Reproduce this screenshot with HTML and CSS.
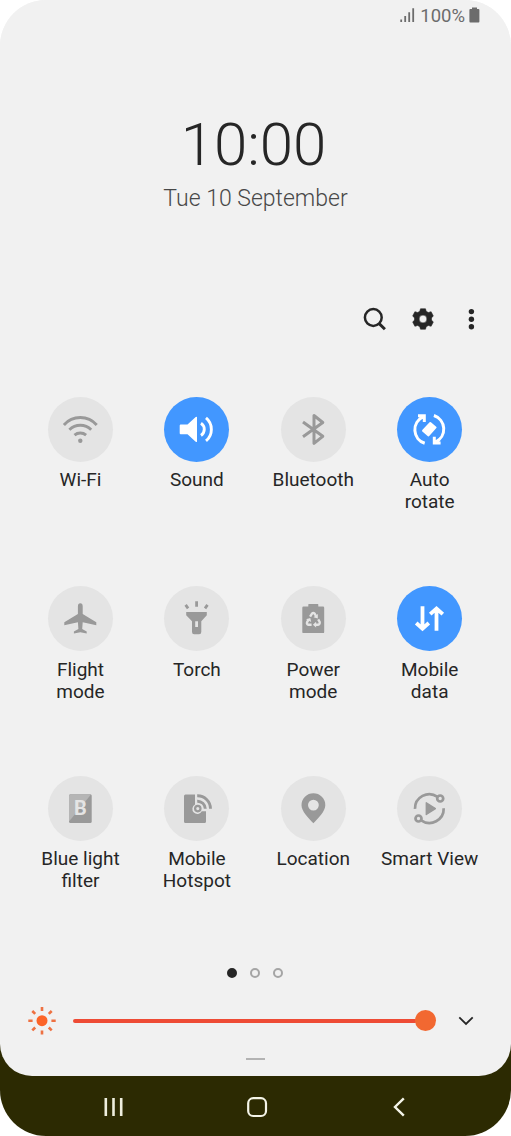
FILE: index.html
```html
<!DOCTYPE html>
<html lang="en">
<head>
<meta charset="utf-8">
<title>Quick settings</title>
<link rel="stylesheet" href="styles.css">
</head>
<body>
<div class="phone">
  <main class="panel">
    <header class="status">
      <svg class="signal" width="15" height="16" viewBox="0 0 15 16"><path d="M1.200 12.400V15M5.200 9V15M9.200 5.200V15M13.200 1.300V15" fill="none" stroke="#6c6c6c" stroke-width="1.800"/></svg>
      <span class="percent">100%</span>
      <svg class="battery" width="11" height="16" viewBox="0 0 11 16"><path d="M3 0.400H8V2H9.500Q10.400 2 10.400 3V14.500Q10.400 15.500 9.500 15.500H1.300Q.4 15.500 .4 14.500V3Q.4 2 1.300 2H3Z" fill="#6c6c6c"/></svg>
    </header>
    <section class="clock">
      <div class="time">10:00</div>
      <div class="date">Tue 10 September</div>
    </section>
    <nav class="actions">
      <svg width="24" height="24" viewBox="0 0 24 24"><g fill="none" stroke="#262626"><circle cx="10.300" cy="10.500" r="8.400" stroke-width="2.500"/><path d="M16.200 16.600L21.900 22.300" stroke-width="2.900"/></g></svg>
      <svg width="24" height="24" viewBox="0 0 24 24"><path fill="#262626" stroke="#262626" stroke-width=".6" stroke-linejoin="round" fill-rule="evenodd" d="M9.500 1.800H14.500L15.200 4.300L17.300 5.500L20.100 4.700L22.300 8.900L20.500 10.900V13.100L22.300 15.100L20.100 19.300L17.300 18.500L15.200 19.700L14.500 22.200H9.500L8.800 19.700L6.700 18.500L3.900 19.300L1.700 15.100L3.500 13.100V10.900L1.700 8.900L3.900 4.700L6.700 5.500L8.800 4.300ZM12 8.100A3.900 3.900 0 1 0 12 15.900A3.900 3.900 0 1 0 12 8.100Z"/></svg>
      <svg width="24" height="24" viewBox="0 0 24 24"><g fill="#262626"><circle cx="12.400" cy="4.600" r="2.700"/><circle cx="12.400" cy="12.200" r="2.700"/><circle cx="12.400" cy="19.700" r="2.700"/></g></svg>
    </nav>
    <section class="tiles">
      <div class="tile">
        <svg class="disc" viewBox="0 0 65 65"><g fill="none" stroke="#999" stroke-width="2.900"><path d="M15.900 28A21.800 21.800 0 0 1 48.700 28M21.400 32.800A15.400 15.400 0 0 1 43.200 32.800M26.500 38.100A9 9 0 0 1 38.100 38.100"/></g><circle cx="32.300" cy="43.700" r="2.200" fill="#999"/></svg>
        <span class="label">Wi-Fi</span>
      </div>
      <div class="tile">
        <svg class="disc on" viewBox="0 0 65 65"><path d="M16.700 27.600H23.500L31.700 20Q33 19.200 33 20.500V44.200Q33 45.600 31.700 44.700L23.500 37.200H16.700Q15.700 37.200 15.700 36.200V28.600Q15.700 27.600 16.700 27.600Z" fill="#fff"/><path d="M37 26.200A7.400 7.400 0 0 1 37 38.500M42 20.900A15 15 0 0 1 42 43.900" fill="none" stroke="#fff" stroke-width="2.900"/></svg>
        <span class="label">Sound</span>
      </div>
      <div class="tile">
        <svg class="disc" viewBox="0 0 65 65"><path d="M22 25L41.800 39.300L33 46.300V18.500L41.800 25.500L22 39.700" fill="none" stroke="#999" stroke-width="3" stroke-linejoin="round"/></svg>
        <span class="label">Bluetooth</span>
      </div>
      <div class="tile">
        <svg class="disc on" viewBox="0 0 65 65"><g fill="none" stroke="#fff" stroke-width="3"><path d="M27.700 46.300A14.300 14.300 0 0 1 26 19.800M21 18.700H27.300V25"/><path d="M36.900 18.500A14.300 14.300 0 0 1 38.600 45M43.600 46.100H37.300V39.800"/></g><path d="M33.300 26L38.600 30.400L31.500 38.400L26 33.800Z" fill="#fff" stroke="#fff" stroke-width="2" stroke-linejoin="round"/></svg>
        <span class="label">Auto<br>rotate</span>
      </div>
      <div class="tile">
        <svg class="disc" viewBox="0 0 65 65"><path d="M32.300 17.200Q34.700 17.200 34.700 20.500V27.900L48.300 36.300V39.200L34.700 36.300L34.200 43.100L38.700 45.600V47.500L32.300 46.300L25.900 47.500V45.600L30.400 43.100L29.900 36.300L16.300 39.200V36.300L29.900 27.900V20.500Q29.900 17.200 32.300 17.200Z" fill="#999"/></svg>
        <span class="label">Flight<br>mode</span>
      </div>
      <div class="tile">
        <svg class="disc" viewBox="0 0 65 65"><path fill="#999" fill-rule="evenodd" d="M22.200 26H42.800V29.200L37.300 35.300V46Q37.300 48.200 35.100 48.200H30.200Q28 48.200 28 46V35.300L22.200 29.200ZM31.200 35.200V41H34V35.200Z"/><path d="M32.600 15.300V20.700M21.600 18.900L24.100 22.300M43.500 18.900L41 22.300" fill="none" stroke="#999" stroke-width="2.800"/></svg>
        <span class="label">Torch</span>
      </div>
      <div class="tile">
        <svg class="disc" viewBox="0 0 65 65"><path d="M27.300 20.500V18.500Q27.300 17.900 27.900 17.900H36.700Q37.300 17.900 37.300 18.500V20.500H42Q43.200 20.500 43.200 21.700V45.900Q43.200 47.100 42 47.100H22.500Q21.300 47.100 21.300 45.900V21.700Q21.300 20.500 22.500 20.500Z" fill="#999"/><g fill="none" stroke="#e4e4e4" stroke-width="2.400" stroke-linejoin="round"><path d="M29.100 30.700L31 27.700Q32.300 26.400 33.600 27.700L35 30"/><path d="M37.200 33.400L38.700 36Q39 38.500 37 38.700H34.300"/><path d="M30.600 38.700H27.500Q25.400 38.300 26.100 36.200L27.800 33.400"/></g><g fill="#e4e4e4"><path d="M36.800 27.900V32.400L32.500 31.300Z"/><path d="M35.100 35.800V41.400L31.900 38.700Z"/><path d="M25 33.300L29.300 31.900L30.200 36Z"/></g></svg>
        <span class="label">Power<br>mode</span>
      </div>
      <div class="tile">
        <svg class="disc on" viewBox="0 0 65 65"><path d="M25.500 20.300V42.500M19.200 37L25.500 42.700L31.800 37M39.500 44.700V22.500M33.200 28.200L39.500 22.500L45.800 28.200" fill="none" stroke="#fff" stroke-width="3.800"/></svg>
        <span class="label">Mobile<br>data</span>
      </div>
      <div class="tile">
        <svg class="disc" viewBox="0 0 65 65"><rect x="21" y="18.300" width="22.700" height="28.700" rx="1.500" fill="#999"/><path d="M22.500 18.300H43.200L21 45.500V19.800Q21 18.300 22.500 18.300Z" fill="#b5b5b5"/><text class="letter" x="32.400" y="39.400">B</text></svg>
        <span class="label">Blue light<br>filter</span>
      </div>
      <div class="tile">
        <svg class="disc" viewBox="0 0 65 65"><path d="M21.500 18.500H31V28.600A5 5 0 1 0 37.800 35.300H42V45.400Q42 46.900 40.500 46.900H21.500Q20 46.900 20 45.400V20Q20 18.500 21.500 18.500Z" fill="#999"/><g fill="none" stroke="#999" stroke-width="2.900"><circle cx="33.800" cy="32.600" r="2.700" stroke-width="2.200"/><path d="M33.200 25.200A7.800 7.800 0 0 1 41.300 32.800M33.200 19.800A13 13 0 0 1 46.500 32.800"/></g></svg>
        <span class="label">Mobile<br>Hotspot</span>
      </div>
      <div class="tile">
        <svg class="disc" viewBox="0 0 65 65"><path fill="#999" fill-rule="evenodd" d="M32.400 17.300A11.900 11.900 0 0 1 44.300 29.200C44.300 35.200 37.500 41.700 32.400 47.200C27.300 41.700 20.500 35.200 20.500 29.200A11.900 11.900 0 0 1 32.400 17.300ZM32.400 23.700A5.400 5.400 0 1 0 32.400 34.500A5.400 5.400 0 1 0 32.400 23.700Z"/></svg>
        <span class="label">Location</span>
      </div>
      <div class="tile">
        <svg class="disc" viewBox="0 0 65 65"><g fill="none" stroke="#999" stroke-width="2.700"><path d="M18 32.900A14.300 14.300 0 0 1 40.500 20.800M46.700 32.300A14.300 14.300 0 0 1 24.200 44.400"/><circle cx="43.200" cy="22.500" r="3"/><circle cx="21.500" cy="42.500" r="3"/></g><path d="M29.300 26.800L38.400 32.600L29.300 38.500Z" fill="#999" stroke="#999" stroke-width="1.400" stroke-linejoin="round"/></svg>
        <span class="label">Smart View</span>
      </div>
    </section>
    <div class="pager"><i class="dot current"></i><i class="dot"></i><i class="dot"></i></div>
    <div class="brightness">
      <svg width="30" height="30" viewBox="0 0 30 30"><circle cx="15" cy="14.700" r="5.500" fill="#fc6428"/><path d="M15 1V5M15 24.400V28.400M1.300 14.700H5.600M24.400 14.700H28.700M5.300 5L8.200 7.900M21.800 21.500L24.700 24.400M5.300 24.400L8.200 21.500M21.800 7.900L24.700 5" fill="none" stroke="#ee7142" stroke-width="2.600"/></svg>
      <div class="slider"><span class="track"></span><span class="thumb"></span></div>
      <svg width="16" height="10" viewBox="0 0 16 10"><path d="M1.300 1.400L8 8L14.700 1.400" fill="none" stroke="#262626" stroke-width="1.800"/></svg>
    </div>
    <div class="handle"></div>
  </main>
  <footer class="softkeys">
    <svg width="20" height="20" viewBox="0 0 20 20"><path d="M2.800 1V19M10.500 1V19M18.200 1V19" fill="none" stroke="#eeeede" stroke-width="2.600"/></svg>
    <svg width="22" height="22" viewBox="0 0 22 22"><rect x="2.200" y="2.200" width="17.800" height="17.800" rx="5" fill="none" stroke="#f4f4e8" stroke-width="2.200"/></svg>
    <svg width="12" height="20" viewBox="0 0 12 20"><path d="M10.800 1.300L2 10L10.800 18.700" fill="none" stroke="#f4f4e8" stroke-width="2.400"/></svg>
  </footer>
</div>
</body>
</html>
```
FILE: styles.css
```css
* { box-sizing: border-box; }

body {
  margin: 0;
  background: #fff;
  color: #262626;
  font-family: Roboto, "Liberation Sans", sans-serif;
}

svg { display: block; flex: none; }

.phone {
  width: 511px;
  height: 1136px;
  overflow: hidden;
  border-radius: 46px;
  background: linear-gradient(#f1f1f1 50%, #2c2a02 50%);
}

.panel {
  display: flex;
  flex-direction: column;
  height: 1076px;
  border-radius: 0 0 32px 32px;
  background: #f1f1f1;
}

.status {
  display: flex;
  align-items: center;
  justify-content: flex-end;
  height: 30px;
  padding-right: 31px;
  color: #6c6c6c;
}

.percent {
  margin: 2px 4px 0 5px;
  font-size: 18.500px;
  line-height: 22px;
}

.clock {
  height: 270px;
  padding-top: 80px;
  text-align: center;
  font-weight: 300;
}

.time {
  padding-right: 4px;
  font-size: 60px;
  line-height: 70px;
}

.date {
  margin-top: 5px;
  color: #484848;
  font-size: 23px;
  line-height: 28px;
}

.actions {
  display: flex;
  justify-content: flex-end;
  gap: 24px;
  height: 97px;
  padding: 7px 28px 0 0;
}

.tiles {
  display: grid;
  grid-template-columns: repeat(4, 116.400px);
  grid-auto-rows: 189.400px;
  height: 568.500px;
  padding-left: 22.300px;
}

.tile {
  display: flex;
  flex-direction: column;
  align-items: center;
}

.disc {
  width: 65px;
  height: 65px;
  border-radius: 50%;
  background: #e4e4e4;
}

.disc.on { background: #4297ff; }

.letter {
  fill: #e4e4e4;
  font: bold 20px Roboto, sans-serif;
  text-anchor: middle;
}

.label {
  margin-top: 7.200px;
  font-size: 19px;
  line-height: 22px;
  text-align: center;
  white-space: nowrap;
}

.pager {
  display: flex;
  justify-content: center;
  gap: 13.200px;
  height: 38px;
  padding: 2.500px 0.500px 0 0;
}

.dot {
  width: 10px;
  height: 10px;
  border: 2px solid #a5a5a5;
  border-radius: 50%;
}

.current {
  border-color: #262626;
  background: #262626;
}

.brightness {
  display: flex;
  align-items: center;
  height: 34px;
  padding: 0 37px 0 27px;
}

.slider {
  display: flex;
  align-items: center;
  width: 363px;
  margin: 0 22px 0 16px;
}

.track {
  flex: 1;
  height: 4px;
  margin-right: -2px;
  border-radius: 2px;
  background: #ee4b35;
}

.thumb {
  width: 21px;
  height: 21px;
  border-radius: 50%;
  background: #f26831;
}

.handle {
  width: 19px;
  height: 2px;
  margin: 20px auto 0;
  background: #b3b3b3;
}

.softkeys {
  display: flex;
  align-items: center;
  justify-content: space-between;
  height: 60px;
  padding: 2px 106px 0 103px;
}

.softkeys svg:nth-child(2) { margin-right: 3px; }
```
